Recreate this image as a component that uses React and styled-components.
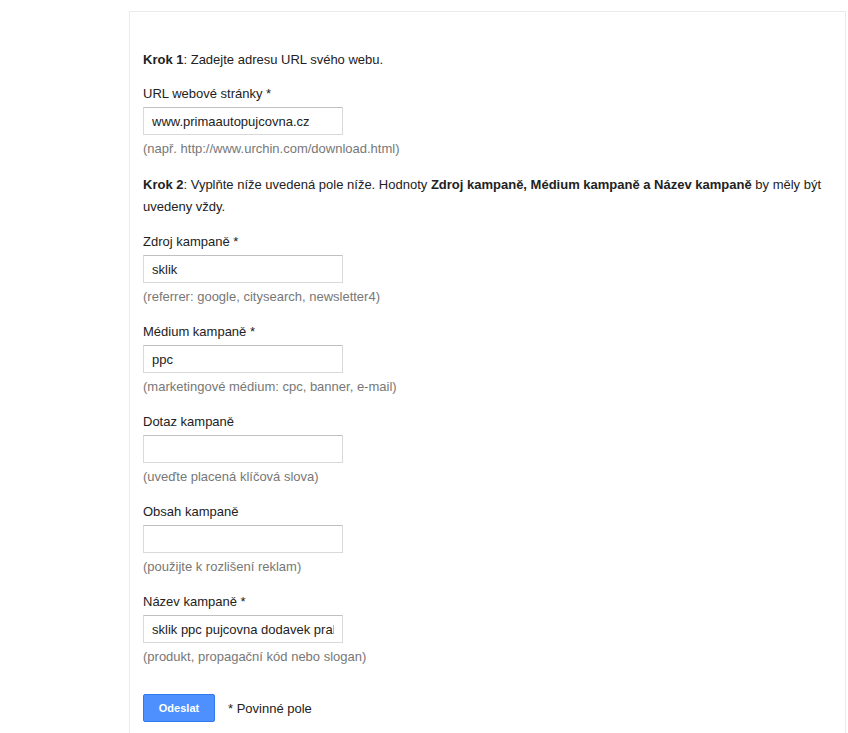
import styled, { createGlobalStyle } from "styled-components";

const GlobalStyle = createGlobalStyle`
  body {
    margin: 0;
    background: #ffffff;
    font-family: "Liberation Sans", Arial, sans-serif;
    color: #222;
  }
`;

// ========================================
// Layout
// ========================================
const Page = styled.div`
  padding: 11px 0 0 129px;
  width: 717px;
  overflow: hidden;
`;

const Panel = styled.form`
  border: 1px solid #ebebeb;
  border-bottom: none;
  padding: 37px 13px 40px 13px;
  min-height: 720px;
  font-size: 13px;
`;

const Step = styled.p`
  margin: 0 0 ${(p) => p.$gap || 14}px;
  line-height: 22px;
  color: #222;
`;

const Field = styled.div`
  display: flex;
  flex-direction: column;
  align-items: flex-start;
  margin-bottom: ${(p) => p.$gap || 16}px;
`;

const Label = styled.label`
  line-height: 18px;
  margin-bottom: 4px;
  color: #222;
`;

const Input = styled.input`
  box-sizing: border-box;
  width: 200px;
  height: 28px;
  margin: 0;
  padding: 0 8px;
  border: 1px solid #d9d9d9;
  border-top-color: #c0c0c0;
  border-radius: 1px;
  font-family: "Liberation Sans", Arial, sans-serif;
  font-size: 13px;
  color: #222;
  outline: none;
`;

const Hint = styled.span`
  margin-top: 5px;
  line-height: 18px;
  color: #777;
`;

const Actions = styled.div`
  display: flex;
  align-items: center;
  gap: 13px;
`;

const SubmitButton = styled.button`
  box-sizing: border-box;
  width: 72px;
  height: 28px;
  border: 1px solid #3079ed;
  border-radius: 2px;
  background: #4d90fe;
  color: #fff;
  font-family: "Liberation Sans", Arial, sans-serif;
  font-size: 11px;
  font-weight: bold;
  cursor: pointer;
`;

const Required = styled.span`
  color: #222;
`;

const fields = [
  { label: "Zdroj kampaně *", value: "sklik", hint: "(referrer: google, citysearch, newsletter4)" },
  { label: "Médium kampaně *", value: "ppc", hint: "(marketingové médium: cpc, banner, e-mail)" },
  { label: "Dotaz kampaně", value: "", hint: "(uveďte placená klíčová slova)" },
  { label: "Obsah kampaně", value: "", hint: "(použijte k rozlišení reklam)" },
  { label: "Název kampaně *", value: "sklik ppc pujcovna dodavek praha", hint: "(produkt, propagační kód nebo slogan)" },
];

export default function App() {
  return (
    <>
      <GlobalStyle />
      <Page>
        <Panel onSubmit={(e) => e.preventDefault()}>
          <Step>
            <b>Krok 1</b>: Zadejte adresu URL svého webu.
          </Step>
          <Field $gap={16}>
            <Label>URL webové stránky *</Label>
            <Input defaultValue="www.primaautopujcovna.cz" />
            <Hint>(např. http://www.urchin.com/download.html)</Hint>
          </Field>
          <Step $gap={15}>
            <b>Krok 2</b>: Vyplňte níže uvedená pole níže. Hodnoty{" "}
            <b>Zdroj kampaně, Médium kampaně a Název kampaně</b> by měly být uvedeny vždy.
          </Step>
          {fields.map((f, i) => (
            <Field key={f.label} $gap={i === fields.length - 1 ? 28 : 17}>
              <Label>{f.label}</Label>
              <Input defaultValue={f.value} />
              <Hint>{f.hint}</Hint>
            </Field>
          ))}
          <Actions>
            <SubmitButton type="submit">Odeslat</SubmitButton>
            <Required>* Povinné pole</Required>
          </Actions>
        </Panel>
      </Page>
    </>
  );
}
